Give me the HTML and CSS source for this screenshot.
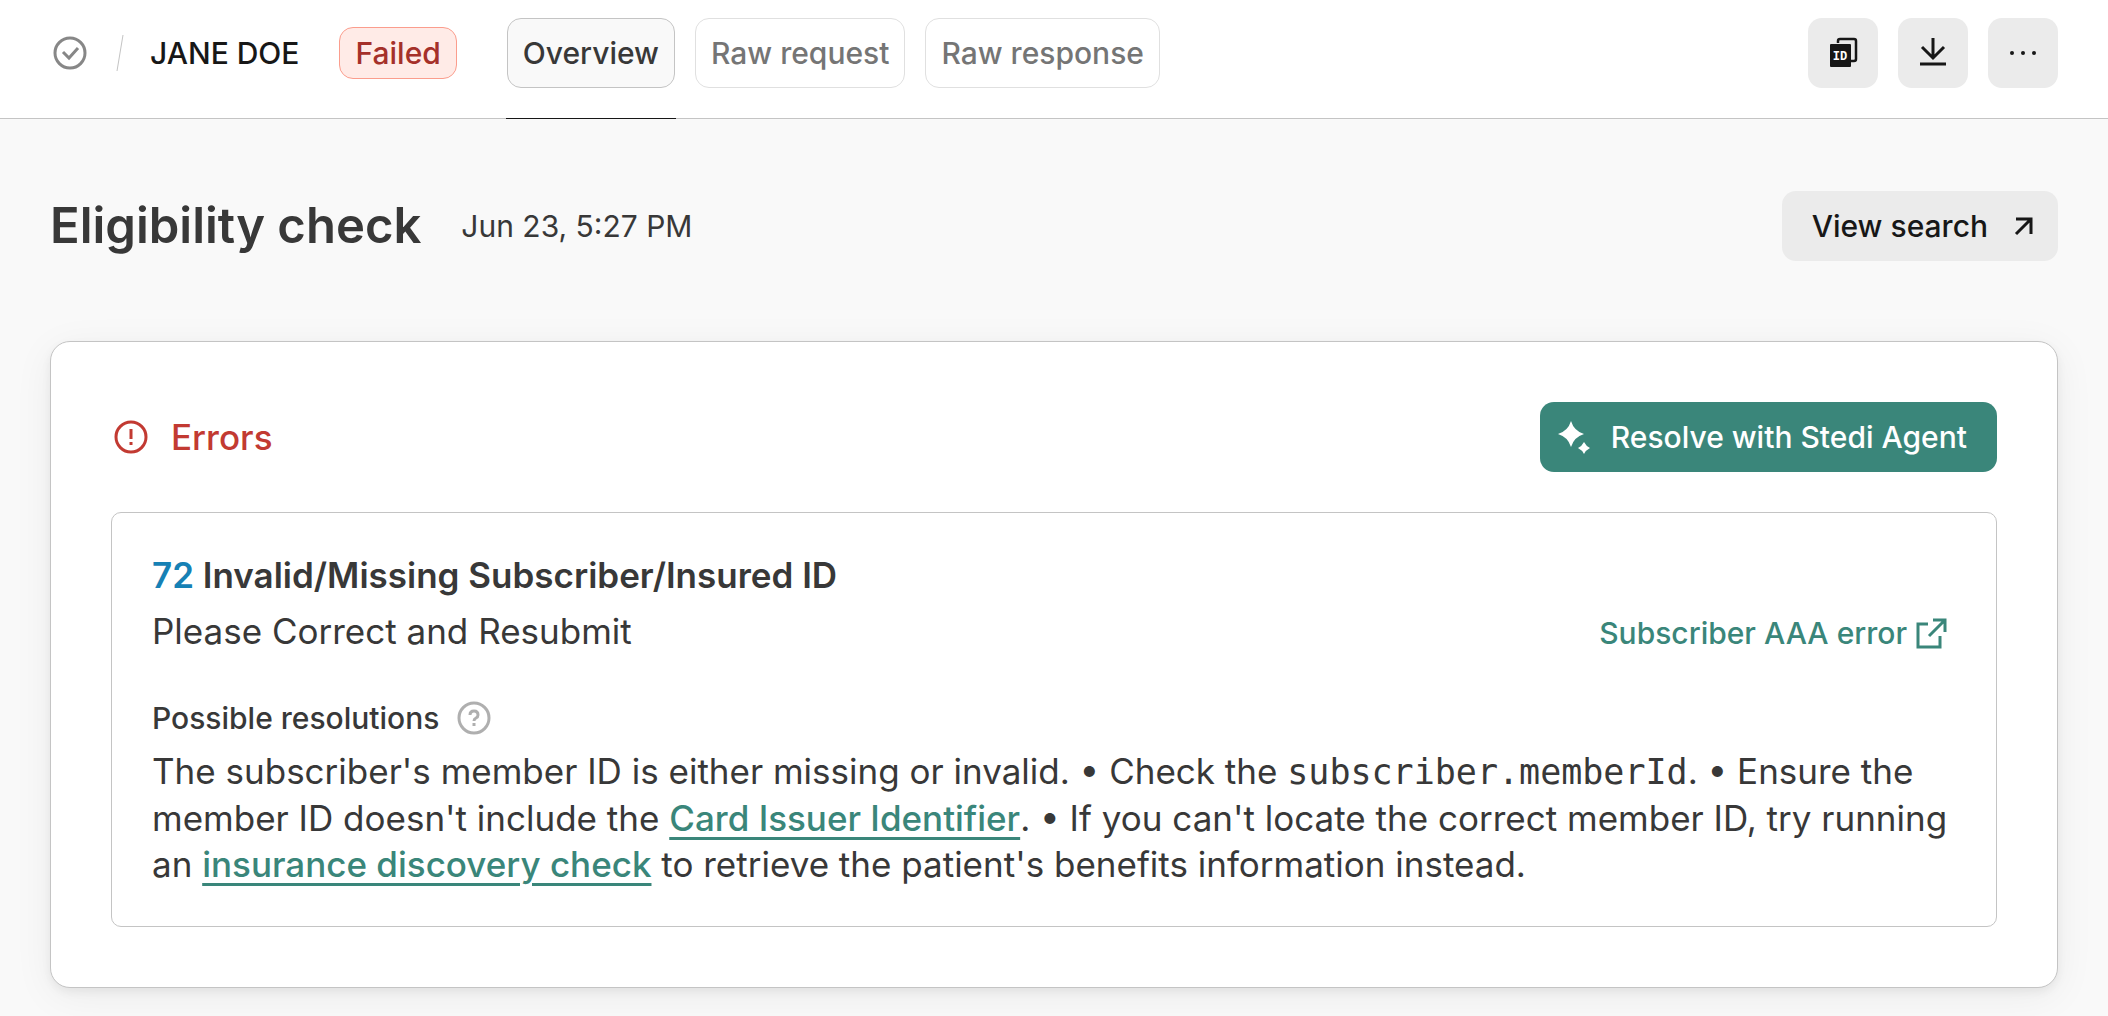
FILE: index.html
```html
<!DOCTYPE html>
<html lang="en">
<head>
  <meta charset="UTF-8">
  <meta name="viewport" content="width=device-width, initial-scale=1.0">
  <title>Eligibility check</title>
  <link rel="stylesheet" href="styles.css">
</head>
<body>

<header class="topbar">
  <svg class="status-icon" width="40" height="40" viewBox="0 0 40 40" fill="none" stroke="#878787" stroke-width="3">
    <circle cx="20" cy="20" r="15"/>
    <path d="M13 19l6 6 9-10"/>
  </svg>
  <svg class="slash" width="10" height="38" viewBox="0 0 10 38" fill="none" stroke="#c4c4c4">
    <path d="M8 1L2 37"/>
  </svg>
  <span class="patient">JANE DOE</span>
  <span class="badge">Failed</span>
  <nav class="tabs">
    <div class="tab active"><a href="#">Overview</a></div>
    <div class="tab"><a href="#">Raw request</a></div>
    <div class="tab"><a href="#">Raw response</a></div>
  </nav>
  <div class="actions">
    <button class="icon-btn" aria-label="Copy ID">
      <svg width="40" height="40" viewBox="0 0 40 40">
        <path d="M15 10V8q0-2 2-2h14q2 0 2 2v18q0 2-2 2h-3" fill="none" stroke="#171717" stroke-width="2.5"/>
        <rect x="7" y="11" width="21" height="23" rx="1" fill="#171717"/>
        <text class="id-text" x="17" y="27" text-anchor="middle">ID</text>
      </svg>
    </button>
    <button class="icon-btn" aria-label="Download">
      <svg width="40" height="40" viewBox="0 0 40 40" fill="none" stroke="#171717" stroke-width="3">
        <path d="M20 5v20M9 14l11 11 11-11M7 31h26"/>
      </svg>
    </button>
    <button class="icon-btn" aria-label="More">
      <svg width="40" height="40" viewBox="0 0 40 40" fill="#171717">
        <circle cx="9" cy="20" r="2"/>
        <circle cx="20" cy="20" r="2"/>
        <circle cx="31" cy="20" r="2"/>
      </svg>
    </button>
  </div>
</header>

<main>
  <div class="page-head">
    <h1>Eligibility check</h1>
    <span class="date">Jun 23, 5:27 PM</span>
    <button class="btn view-search">
      View search
      <svg width="20" height="20" viewBox="0 0 20 20" fill="none" stroke="#171717" stroke-width="3">
        <path d="M2 3h15v15M17 3L2 18"/>
      </svg>
    </button>
  </div>

  <section class="card">
    <div class="card-head">
      <svg width="40" height="40" viewBox="0 0 40 40" fill="none" stroke="#c23a32" stroke-width="3">
        <circle cx="20" cy="20" r="15"/>
        <path d="M20 12v10M20 25v3"/>
      </svg>
      <h2>Errors</h2>
      <button class="btn resolve">
        <svg width="40" height="40" viewBox="0 0 40 40" fill="#fff">
          <path d="M16 4q3 10 13 13q-10 3-13 13q-3-10-13-13q10-3 13-13z"/>
          <path d="M29 25q2 4 6 6q-4 2-6 6q-2-4-6-6q4-2 6-6z"/>
        </svg>
        Resolve with Stedi Agent
      </button>
    </div>

    <div class="error">
      <h3><span class="code">72</span> Invalid/Missing Subscriber/Insured ID</h3>
      <div class="error-row">
        <p>Please Correct and Resubmit</p>
        <a class="doc-link" href="#">
          Subscriber AAA error
          <svg width="32" height="32" viewBox="0 0 32 32" fill="none" stroke="#3a867a" stroke-width="3">
            <path d="M13 7H3v23h22V19M18 3h12v12M30 3L14 19"/>
          </svg>
        </a>
      </div>
      <h4>
        Possible resolutions
        <svg width="40" height="40" viewBox="0 0 40 40" fill="none" stroke="#afafaf" stroke-width="3">
          <circle cx="20" cy="20" r="15"/>
          <path d="M16 17q0-4 4-4t4 4q0 2-2 3t-2 3M20 25v3"/>
        </svg>
      </h4>
      <p class="text">The subscriber's member ID is either missing or invalid. • Check the <code>subscriber.memberId</code>. • Ensure the member ID doesn't include the <a href="#">Card Issuer Identifier</a>. • If you can't locate the correct member ID, try running an <a href="#">insurance discovery check</a> to retrieve the patient's benefits information instead.</p>
    </div>
  </section>
</main>

</body>
</html>
```
FILE: styles.css
```css
* {
  box-sizing: border-box;
}
body {
  margin: 0;
  background: #f9f9f9;
  color: #383838;
  font-family: Inter, sans-serif;
  font-size: 30px;
}
h1, h2, h3, h4, p {
  margin: 0;
}
svg {
  display: block;
  flex-shrink: 0;
}
button {
  border: 0;
  font: inherit;
  cursor: pointer;
}
.topbar {
  display: flex;
  align-items: center;
  height: 119px;
  padding: 0 50px 12px;
  background: #fff;
  border-bottom: 1px solid #c4c4c4;
}
.slash {
  margin: 0 25px;
}
.patient {
  color: #171717;
  font-weight: 500;
}
.badge {
  margin: 0 50px 0 40px;
  padding: 0 15px;
  background: #ffebe7;
  border: 1px solid #fb9d8d;
  border-radius: 14px;
  color: #a5302a;
  font-weight: 500;
  line-height: 50px;
}
.tabs {
  display: flex;
  gap: 20px;
}
.tab {
  position: relative;
}
.tab a {
  display: block;
  padding: 0 15px;
  border: 1px solid #e0e0e0;
  border-radius: 14px;
  color: #757575;
  font-weight: 500;
  line-height: 68px;
  text-decoration: none;
}
.tab.active a {
  background: #f9f9f9;
  border-color: #c4c4c4;
  color: #383838;
}
.tab.active::after {
  content: "";
  position: absolute;
  left: -1px;
  right: -1px;
  bottom: -31px;
  height: 1px;
  background: #171717;
}
.actions {
  display: flex;
  gap: 20px;
  margin-left: auto;
}
.icon-btn {
  width: 70px;
  height: 70px;
  padding: 15px;
  background: #ebebeb;
  border-radius: 14px;
}
.id-text {
  fill: #fff;
  font-family: "Liberation Mono", monospace;
  font-size: 12px;
  font-weight: bold;
}
main {
  padding: 72px 50px 28px;
}
.page-head {
  display: flex;
  align-items: center;
  margin-bottom: 80px;
}
h1 {
  font-size: 49px;
  font-weight: 600;
  line-height: 70px;
}
.date {
  margin-left: 40px;
}
.btn {
  display: flex;
  align-items: center;
  height: 70px;
  border-radius: 14px;
  font-weight: 500;
}
.view-search {
  gap: 26px;
  margin-left: auto;
  padding: 0 24px 0 30px;
  background: #ebebeb;
  color: #171717;
}
.card {
  padding: 60px;
  background: #fff;
  border: 1px solid #c4c4c4;
  border-radius: 20px;
  box-shadow: 0 8px 40px rgba(0, 0, 0, 0.06), 0 4px 10px rgba(0, 0, 0, 0.06);
}
.card-head {
  display: flex;
  align-items: center;
  gap: 20px;
  margin-bottom: 40px;
  color: #c23a32;
}
h2 {
  font-size: 35px;
  font-weight: 500;
}
.resolve {
  gap: 16px;
  margin-left: auto;
  padding: 0 30px 0 15px;
  background: #3a867a;
  color: #fff;
}
.error {
  padding: 39px 40px;
  border: 1px solid #c4c4c4;
  border-radius: 10px;
}
h3 {
  font-size: 35px;
  font-weight: 600;
  line-height: 46px;
}
.code {
  color: #1681b5;
}
.error-row {
  display: flex;
  align-items: baseline;
  justify-content: space-between;
  margin: 10px 0 32px;
  font-size: 35px;
  line-height: 46px;
}
.doc-link {
  display: flex;
  align-items: center;
  gap: 8px;
  padding-right: 9px;
  color: #3a867a;
  font-size: 30px;
  font-weight: 500;
  text-decoration: none;
}
h4 {
  display: flex;
  align-items: center;
  gap: 15px;
  height: 60px;
  font-size: 30px;
  font-weight: 500;
}
.text {
  font-size: 35px;
  line-height: 46px;
}
.text a {
  color: #3a867a;
  font-weight: 500;
  text-decoration-thickness: 3px;
  text-underline-offset: 6px;
}
code {
  font-family: "DejaVu Sans Mono", monospace;
  font-size: 35px;
}
```
